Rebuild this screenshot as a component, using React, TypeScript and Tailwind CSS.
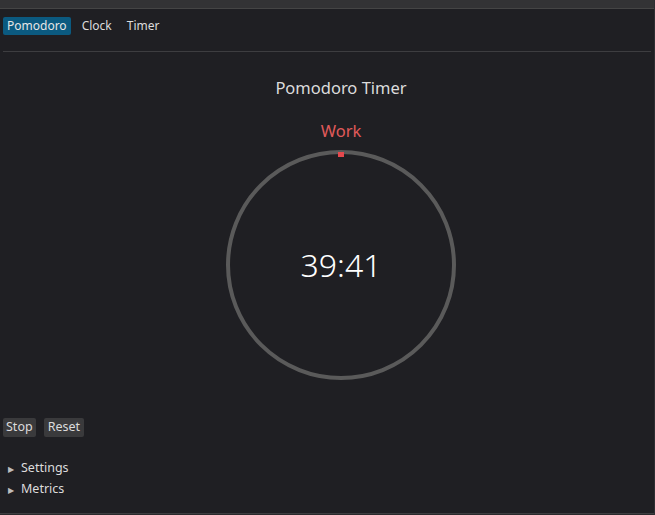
import React, { useState } from "react";

const TABS = ["Pomodoro", "Clock", "Timer"];

const Disclosure = ({ label }: { label: string }) => (
  <div className="flex items-center h-[21px] pl-[8px]">
    <span className="text-[8px] text-[#bdbdbd] w-[13px] leading-none">▶</span>
    <span className="text-[12.5px] text-[#dcdcdc]">{label}</span>
  </div>
);

const Dial = () => (
  <svg width="232" height="232" viewBox="0 0 232 232">
    <circle cx="116" cy="116" r="113" fill="none" stroke="#5a5a5a" strokeWidth="4" />
    <rect x="113" y="3" width="6" height="5" fill="#e5484d" />
  </svg>
);

export default function App() {
  const [tab, setTab] = useState("Pomodoro");

  return (
    <div
      className="w-[655px] h-[515px] bg-[#1f1f23] text-[#dcdcdc] flex flex-col overflow-hidden border-r border-[#2e2e32]"
      style={{ fontFamily: '"Noto Sans", "Open Sans", sans-serif' }}
    >
      <div className="h-[9px] bg-[#333335] border-b border-[#454545] shrink-0" />
      <div className="flex items-center gap-[7px] px-[3px] pt-[4px] h-[30px]">
        {TABS.map((t) => (
          <button
            key={t}
            onClick={() => setTab(t)}
            className={
              "h-[18px] px-[4px] rounded-[2px] text-[12px] leading-none " +
              (tab === t ? "bg-[#0b5a80] text-[#e6e6e6]" : "text-[#dcdcdc]")
            }
          >
            {t}
          </button>
        ))}
      </div>
      <div className="mx-[3px] mt-[12px] border-t border-[#3d3d40]" />
      <div className="flex flex-col items-center pl-[28px]">
        <div className="mt-[28px] text-[16.5px] text-[#dcdcdc] leading-none">Pomodoro Timer</div>
        <div className="mt-[26px] text-[16.5px] text-[#e05a5a] leading-none">Work</div>
        <div className="relative mt-[10px] w-[232px] h-[232px]">
          <Dial />
          <div className="absolute inset-0 flex items-center justify-center text-[32px] text-white font-light">
            39:41
          </div>
        </div>
      </div>
      <div className="flex gap-[8px] px-[3px] mt-[37px]">
        <button className="h-[19px] px-[3px] bg-[#3a3a3c] rounded-[2px] text-[12.5px] leading-none text-[#dcdcdc]">Stop</button>
        <button className="h-[19px] px-[4px] bg-[#3a3a3c] rounded-[2px] text-[12.5px] leading-none text-[#dcdcdc]">Reset</button>
      </div>
      <div className="mt-[21px] flex flex-col">
        <Disclosure label="Settings" />
        <Disclosure label="Metrics" />
      </div>
      <div className="flex-1" />
      <div className="h-[2px] border-t border-[#3d3d40] bg-[#2a2a2c]" />
    </div>
  );
}
